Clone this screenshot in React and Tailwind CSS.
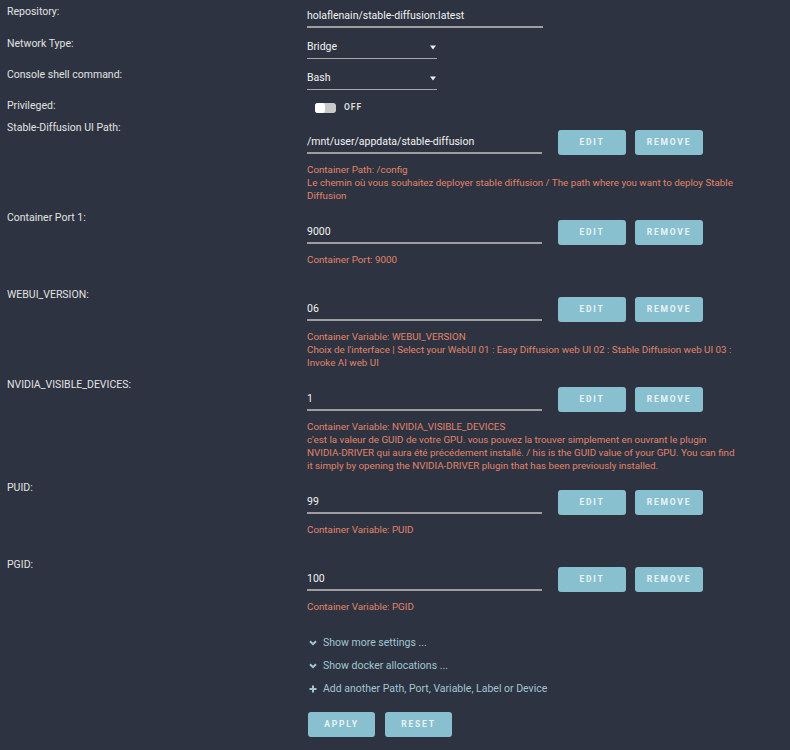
const font = { fontFamily: 'Roboto, "Noto Sans", sans-serif' };

const params = [
  {
    label: 'Stable-Diffusion UI Path:',
    value: '/mnt/user/appdata/stable-diffusion',
    desc: [
      'Container Path: /config',
      'Le chemin où vous souhaitez deployer stable diffusion / The path where you want to deploy Stable',
      'Diffusion',
    ],
  },
  { label: 'Container Port 1:', value: '9000', desc: ['Container Port: 9000'] },
  {
    label: 'WEBUI_VERSION:',
    value: '06',
    desc: [
      'Container Variable: WEBUI_VERSION',
      'Choix de l\'interface | Select your WebUI 01 : Easy Diffusion web UI 02 : Stable Diffusion web UI 03 :',
      'Invoke AI web UI',
    ],
  },
  {
    label: 'NVIDIA_VISIBLE_DEVICES:',
    value: '1',
    desc: [
      'Container Variable: NVIDIA_VISIBLE_DEVICES',
      'c\'est la valeur de GUID de votre GPU. vous pouvez la trouver simplement en ouvrant le plugin',
      'NVIDIA-DRIVER qui aura été précédement installé. / his is the GUID value of your GPU. You can find',
      'it simply by opening the NVIDIA-DRIVER plugin that has been previously installed.',
    ],
  },
  { label: 'PUID:', value: '99', desc: ['Container Variable: PUID'] },
  { label: 'PGID:', value: '100', desc: ['Container Variable: PGID'] },
];

function Label({ children }) {
  return (
    <div className="w-[300px] shrink-0 pl-[7px] pt-[6px] text-[10.5px] leading-[14px] text-[#e2e2e2]">
      {children}
    </div>
  );
}

function Btn({ children, w = 'w-[68px]' }) {
  return (
    <button className={`${w} h-[25px] rounded-[3px] bg-[#89c0cf] text-[8.5px] font-bold tracking-[1.8px] text-[#eaf4f7]`}>
      {children}
    </button>
  );
}

function SelectBox({ value }) {
  return (
    <div className="mt-[7px] flex w-[130px] items-center justify-between border-b border-[#a8a8a8] pt-[2px] pb-[4px] text-[10.5px] leading-[14px] text-[#f2f2f2]">
      <span>{value}</span>
      <svg width="6" height="5" viewBox="0 0 6 5" className="mr-[1px]">
        <path d="M0 0.5 H6 L3 4.5 Z" fill="#ececec" />
      </svg>
    </div>
  );
}

function Chevron() {
  return (
    <svg width="8" height="6" viewBox="0 0 8 6" className="shrink-0">
      <path d="M1 1.2 L4 4.2 L7 1.2" fill="none" stroke="currentColor" strokeWidth="2" />
    </svg>
  );
}

function PlusIcon() {
  return (
    <svg width="8" height="8" viewBox="0 0 8 8" className="shrink-0">
      <path d="M4 0.5 V7.5 M0.5 4 H7.5" fill="none" stroke="currentColor" strokeWidth="2" />
    </svg>
  );
}

export default function App() {
  return (
    <div className="min-h-[750px] w-[790px] bg-[#2d3340]" style={font}>
      {/* Repository */}
      <div className="flex h-[31px]">
        <div className="w-[300px] shrink-0 pl-[7px] pt-[5px] text-[10.5px] leading-[14px] text-[#e2e2e2]">Repository:</div>
        <div className="ml-[7px] mt-[7px] h-[21px] w-[236px] border-b-2 border-[#9e9e9e] pt-[2px] text-[10.5px] leading-[14px] text-[#f2f2f2]">
          holaflenain/stable-diffusion:latest
        </div>
      </div>

      <div className="flex h-[31px]">
        <Label>Network Type:</Label>
        <div className="ml-[7px]"><SelectBox value="Bridge" /></div>
      </div>

      <div className="flex h-[31px]">
        <Label>Console shell command:</Label>
        <div className="ml-[7px]"><SelectBox value="Bash" /></div>
      </div>

      <div className="flex h-[22px]">
        <Label>Privileged:</Label>
        <div className="ml-[15px] mt-[7px] flex items-center gap-[8px]">
          <div className="flex h-[10px] w-[21px] rounded-[3px] bg-[#c9c9c9]">
            <div className="h-[10px] w-[10px] rounded-[3px] bg-white" />
          </div>
          <span className="text-[8.5px] font-bold tracking-[1px] text-[#dcdcdc]">OFF</span>
        </div>
      </div>

      {params.map((p) => (
        <div key={p.label} className="flex min-h-[77px] pb-[3px]">
          <Label>{p.label}</Label>
          <div className="ml-[7px] pt-[15px]">
            <div className="flex items-start">
              <div className="h-[24px] w-[235px] border-b-2 border-[#9e9e9e] pt-[5px] text-[10.5px] leading-[14px] text-[#f2f2f2]">
                {p.value}
              </div>
              <div className="ml-[16px] flex gap-[9px]">
                <Btn>EDIT</Btn>
                <Btn>REMOVE</Btn>
              </div>
            </div>
            <div className="mt-[8px] whitespace-nowrap text-[9.8px] leading-[13px] text-[#e0846b]">
              {p.desc.map((d, i) => (
                <div key={i}>{d}</div>
              ))}
            </div>
          </div>
        </div>
      ))}

      <div className="ml-[309px] flex flex-col gap-[9px] pt-[7px] text-[10.5px] leading-[14px] text-[#a0c6d3]">
        <div className="flex items-center gap-[6px]">
          <Chevron />
          <span>Show more settings ...</span>
        </div>
        <div className="flex items-center gap-[6px]">
          <Chevron />
          <span>Show docker allocations ...</span>
        </div>
        <div className="flex items-center gap-[6px]">
          <PlusIcon />
          <span>Add another Path, Port, Variable, Label or Device</span>
        </div>
      </div>

      <div className="ml-[308px] mt-[16px] flex gap-[10px]">
        <Btn w="w-[67px]">APPLY</Btn>
        <Btn w="w-[67px]">RESET</Btn>
      </div>
    </div>
  );
}
